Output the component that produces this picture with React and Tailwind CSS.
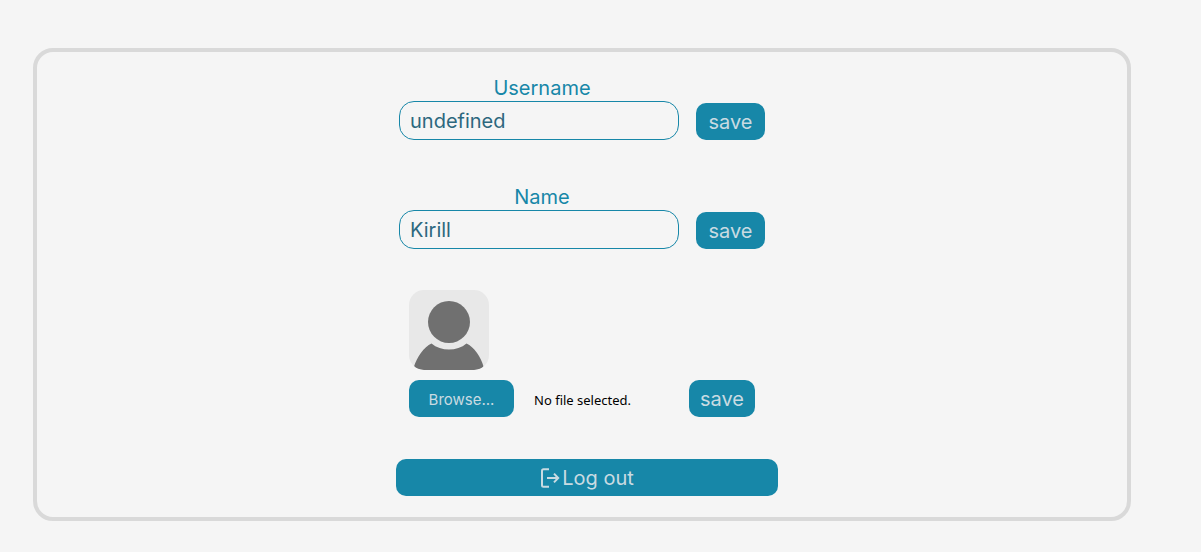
import { useRef, useState } from "react";

const buttonClass =
  "h-[37px] rounded-[10px] bg-[#1787a8] text-xl font-normal leading-6 text-[#c9dbe2]";

function Field({ id, label, initial }) {
  const [value, setValue] = useState(initial);
  return (
    <div className="flex items-end">
      <div className="flex flex-col">
        <label htmlFor={id} className="w-[286px] text-center text-xl leading-6 text-[#1787a8]">
          {label}
        </label>
        <input
          id={id}
          type="text"
          value={value}
          onChange={(e) => setValue(e.target.value)}
          className="mt-px h-[39px] w-[280px] rounded-[15px] border border-[#1787a8] bg-transparent px-2.5 text-xl text-[#2d687e] outline-none"
        />
      </div>
      <button type="button" className={`${buttonClass} ml-[11px] w-[69px]`}>
        save
      </button>
    </div>
  );
}

function Avatar() {
  return (
    <svg viewBox="0 0 80 80" className="size-20 rounded-[15px]" role="img" aria-label="Avatar">
      <rect width="80" height="80" fill="#e8e8e8" />
      <circle cx="40" cy="32" r="21" fill="#707070" />
      <path
        d="M22.5 53.5C32 61.5 48 61.5 57.5 53.5C65 57 72 67 74.5 76.5Q72 80 66 80H14Q8 80 5 76.5C8 67 15 57 22.5 53.5Z"
        fill="#707070"
      />
    </svg>
  );
}

function LogoutIcon() {
  return (
    <svg
      viewBox="0 0 20 20"
      className="size-5"
      fill="none"
      stroke="currentColor"
      strokeWidth="2"
      aria-hidden="true"
    >
      <path d="M9 1.2H3.5Q2 1.2 2 2.7V17.3Q2 18.8 3.5 18.8H9" />
      <path d="M7 10H18M14 5.6L18.2 10L14 14.4" />
    </svg>
  );
}

export default function App() {
  const fileInput = useRef(null);
  const [fileName, setFileName] = useState("No file selected.");

  return (
    <div className="min-h-screen bg-[#f5f5f5] pt-12 pr-[70px] pb-[31px] pl-[33px] font-['Inter',sans-serif]">
      <main className="flex flex-col items-center rounded-[20px] border-4 border-[#d9d9d9] pt-6 pb-[21px]">
        <div className="flex flex-col gap-[45px]">
          <Field id="username" label="Username" initial="undefined" />
          <Field id="name" label="Name" initial="Kirill" />
        </div>

        <div className="mt-[41px] w-[346px]">
          <Avatar />
          <div className="mt-2.5 flex items-center">
            <input
              ref={fileInput}
              type="file"
              aria-label="Avatar file"
              className="hidden"
              onChange={(e) => setFileName(e.target.files[0]?.name ?? "No file selected.")}
            />
            <button
              type="button"
              onClick={() => fileInput.current.click()}
              className="h-[37px] w-[105px] rounded-[10px] bg-[#1787a8] pt-[3px] text-[15px] font-normal text-[#c9dbe2]"
            >
              Browse...
            </button>
            <span className="ml-5 truncate pt-1 font-['Noto_Sans',sans-serif] text-[13px] text-black">
              {fileName}
            </span>
            <button type="button" className={`${buttonClass} ml-auto w-[66px] shrink-0`}>
              save
            </button>
          </div>
        </div>

        <button
          type="button"
          className={`${buttonClass} mt-[42px] ml-2.5 flex w-[382px] items-center justify-center gap-0.5`}
        >
          <LogoutIcon />
          Log out
        </button>
      </main>
    </div>
  );
}
